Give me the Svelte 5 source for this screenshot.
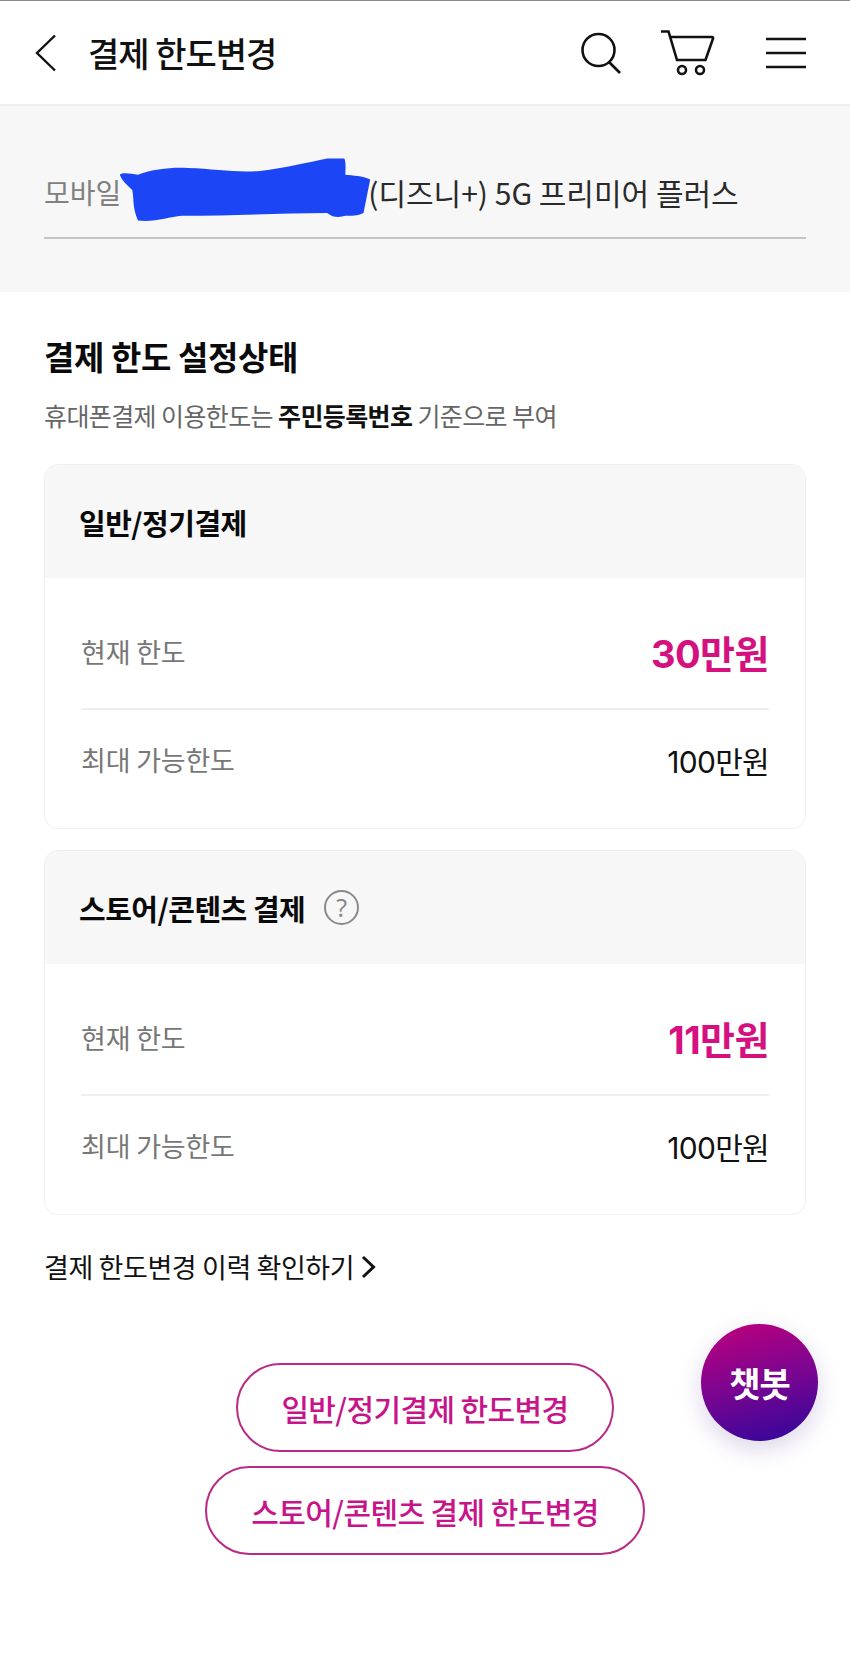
<script>
  const limits = [
    { title: '일반/정기결제', current: '30만원', max: '100만원', help: false },
    { title: '스토어/콘텐츠 결제', current: '11만원', max: '100만원', help: true },
  ];
</script>

<div class="page">
  <header>
    <div class="left">
      <svg class="back" width="24" height="38" viewBox="0 0 24 38" fill="none" stroke="#111" stroke-width="2.4">
        <path d="M21 1.500 3 19l18 17.500" />
      </svg>
      <h1>결제 한도변경</h1>
    </div>
    <div class="icons">
      <svg width="42" height="42" viewBox="0 0 42 42" fill="none" stroke="#111" stroke-width="2.6">
        <circle cx="18.500" cy="18" r="16" />
        <path d="m29 30 11 11" />
      </svg>
      <svg width="56" height="46" viewBox="0 0 56 46" fill="none" stroke="#111" stroke-width="2.6">
        <path d="M1 1.500h7.500L17 30h28.500L53 8.500a1 1 0 0 0-1-1.500H10" />
        <circle cx="22" cy="40" r="4" />
        <circle cx="40" cy="40" r="4" />
      </svg>
      <svg width="40" height="32" viewBox="0 0 40 32" fill="none" stroke="#111" stroke-width="2.4">
        <path d="M0 2h40M0 16h40M0 30h40" />
      </svg>
    </div>
  </header>

  <section class="plan">
    <div class="select">
      <span class="muted">모바일</span><span class="hidden-name"></span><span>(디즈니+) 5G 프리미어 플러스</span>
      <svg class="scribble" width="258" height="74" viewBox="0 0 270 74">
        <path fill="#1c46f5" d="M4 20c3-3 12-1 19 0 16-6 36-8 52-7 30 1 50 5 76 3 26-3 50-9 70-13l18 0c2 5 1 12 1 17 8 1 18 1 26 5l-4 20-3 15c-6 3-13 3-19 3-6 2-13 2-19-3-50 0-100 3-152 3-14 1-28 7-46 5-6-14-4-22-6-32-6-6-11-10-13-16Z" />
      </svg>
    </div>
  </section>

  <main>
    <h2>결제 한도 설정상태</h2>
    <p class="desc">휴대폰결제 이용한도는 <b>주민등록번호</b> 기준으로 부여</p>

    {#each limits as item}
      <div class="card">
        <div class="card-head">
          <h3>{item.title}</h3>
          {#if item.help}
            <span class="help">?</span>
          {/if}
        </div>
        <div class="rows">
          <div class="row first">
            <span class="label">현재 한도</span>
            <strong>{item.current}</strong>
          </div>
          <div class="row">
            <span class="label">최대 가능한도</span>
            <span class="max">{item.max}</span>
          </div>
        </div>
      </div>
    {/each}

    <a class="history" href="#history">
      결제 한도변경 이력 확인하기
      <svg width="15" height="24" viewBox="0 0 15 24" fill="none" stroke="#111" stroke-width="3">
        <path d="m2 2 10.500 10L2 22" />
      </svg>
    </a>

    <div class="buttons">
      <button class="wide-a">일반/정기결제 한도변경</button>
      <button class="wide-b">스토어/콘텐츠 결제 한도변경</button>
    </div>
  </main>

  <div class="chatbot">챗봇</div>
</div>

<style>
  :global(body) {
    margin: 0;
    background: #fff;
  }

  .page {
    position: relative;
    width: 850px;
    height: 1669px;
    overflow: hidden;
    border-top: 1px solid #8a8a8a;
    box-sizing: border-box;
    font-family: "Noto Sans CJK KR", "Noto Sans", sans-serif;
    color: #111;
  }

  header {
    height: 105px;
    box-sizing: border-box;
    border-bottom: 2px solid #efeff0;
    display: flex;
    align-items: center;
    justify-content: space-between;
    padding: 0 44px 0 34px;
  }

  .left {
    display: flex;
    align-items: center;
    gap: 30px;
  }

  h1 {
    margin: 0;
    font-size: 34px;
    font-weight: 500;
    letter-spacing: -1px;
  }

  .icons {
    display: flex;
    align-items: center;
    gap: 0;
  }

  .icons svg:nth-child(1) {
    margin-right: 38px;
  }

  .icons svg:nth-child(2) {
    margin-right: 50px;
  }

  .plan {
    height: 186px;
    background: #f7f7f8;
    padding: 0 44px;
    box-sizing: border-box;
  }

  .select {
    position: relative;
    height: 133px;
    box-sizing: border-box;
    padding-top: 66px;
    border-bottom: 2px solid #c4c4c6;
    display: flex;
    font-size: 30px;
    line-height: 40px;
    color: #2a2a2a;
  }

  .muted {
    color: #808080;
    font-size: 28px;
  }

  .hidden-name {
    width: 247px;
  }

  .scribble {
    position: absolute;
    left: 72px;
    top: 48px;
  }

  main {
    padding: 0 44px;
  }

  h2 {
    margin: 42px 0 0;
    font-size: 33px;
    line-height: 44px;
    font-weight: 700;
    letter-spacing: -0.4px;
    color: #0a0a0a;
  }

  .desc {
    margin: 20px 0 32px;
    font-size: 25px;
    line-height: 34px;
    color: #666;
    letter-spacing: -0.6px;
  }

  .desc b {
    color: #111;
    font-weight: 700;
  }

  .card {
    border: 1.500px solid #efeff0;
    border-radius: 14px;
    overflow: hidden;
    margin-bottom: 21px;
    height: 365px;
    box-sizing: border-box;
  }

  .card-head {
    height: 113px;
    background: #f7f7f8;
    display: flex;
    align-items: center;
    gap: 19px;
    padding: 0 34px;
  }

  h3 {
    margin: 0;
    font-size: 29px;
    font-weight: 700;
    letter-spacing: -0.5px;
    color: #0a0a0a;
  }

  .help {
    width: 35px;
    height: 35px;
    box-sizing: border-box;
    border: 2px solid #8a8a8a;
    border-radius: 50%;
    color: #8a8a8a;
    font-size: 25px;
    line-height: 31px;
    text-align: center;
    font-family: "Noto Sans", sans-serif;
  }

  .rows {
    padding: 0 36px;
  }

  .row {
    height: 99px;
    display: flex;
    align-items: center;
    justify-content: space-between;
  }

  .row.first {
    height: 132px;
    padding-top: 17px;
    box-sizing: border-box;
    border-bottom: 2px solid #efeff0;
  }

  .label {
    font-size: 27px;
    color: #777;
    letter-spacing: -0.2px;
  }

  strong {
    font-family: Inter, "Noto Sans CJK KR", sans-serif;
    font-size: 38px;
    font-weight: 700;
    color: #d4117f;
    letter-spacing: -0.5px;
  }

  .max {
    font-family: Inter, "Noto Sans CJK KR", sans-serif;
    font-size: 30px;
    color: #111;
    letter-spacing: -0.7px;
  }

  .history {
    display: flex;
    align-items: center;
    gap: 7px;
    margin-top: 32px;
    font-size: 27px;
    line-height: 40px;
    color: #111;
    text-decoration: none;
    letter-spacing: -0.4px;
  }

  .buttons {
    display: flex;
    flex-direction: column;
    align-items: center;
    gap: 14px;
    margin-top: 76px;
  }

  button {
    height: 89px;
    box-sizing: border-box;
    background: #fff;
    border: 2px solid #b92a84;
    border-radius: 45px;
    color: #c7148a;
    font-family: inherit;
    font-size: 30px;
    font-weight: 500;
    letter-spacing: -0.6px;
    padding: 0;
  }

  .wide-a {
    width: 378px;
  }

  .wide-b {
    width: 440px;
  }

  .chatbot {
    position: absolute;
    left: 701px;
    top: 1323px;
    width: 117px;
    height: 117px;
    border-radius: 50%;
    background: linear-gradient(165deg, #b8007e 5%, #7a0591 50%, #35069a 95%);
    box-shadow: 0 8px 24px rgba(60, 20, 120, 0.18);
    color: #fff;
    display: flex;
    align-items: center;
    justify-content: center;
    font-size: 34px;
    font-weight: 700;
    letter-spacing: -1px;
  }
</style>
